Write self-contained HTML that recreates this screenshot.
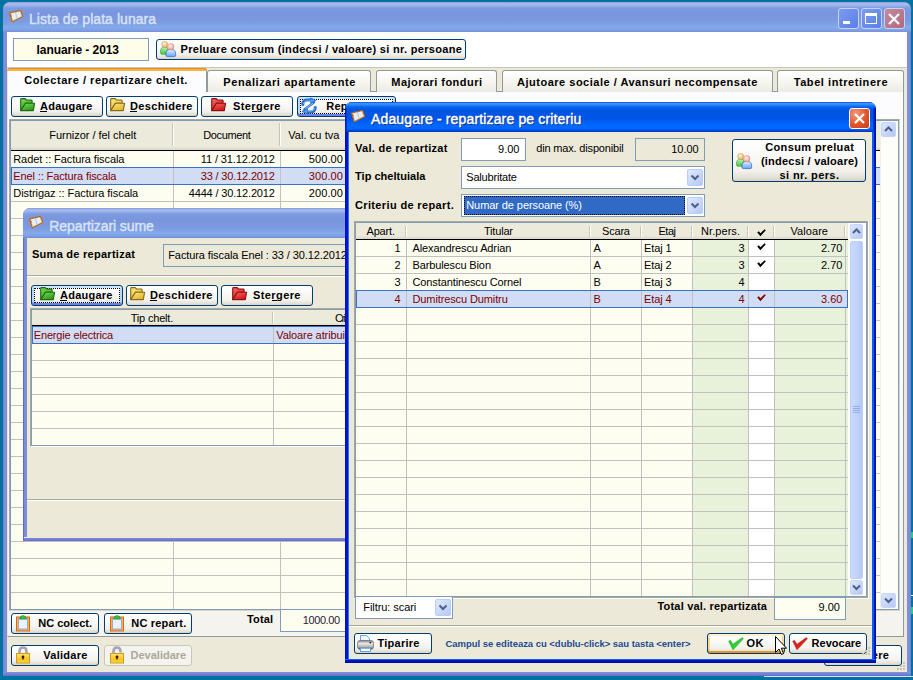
<!DOCTYPE html>
<html><head><meta charset="utf-8"><style>
*{margin:0;padding:0;box-sizing:border-box}
html,body{width:913px;height:680px;overflow:hidden;background:#0272A0;font-family:"Liberation Sans",sans-serif;font-size:11px;color:#000}
div{position:absolute}
.t{white-space:nowrap}
.btn{border:1px solid #003C74;border-radius:3px;background:linear-gradient(#FFFFFF 0%,#FBFBF9 30%,#F2F1EC 75%,#E3E0D5 92%,#D6D0C3 100%)}
.btnd{border:1px solid #C9C7BA;border-radius:3px;background:#F4F3EE}
svg{position:absolute;overflow:visible}
</style></head><body><div style="left:3px;top:2px;width:908px;height:674px;background:linear-gradient(90deg,#6A78D0 0px,#7E8EDC 1px,#7E8EDC 907px,#6A78D0 908px);border-radius:7px 7px 0 0;"></div>
<div style="left:3px;top:672px;width:908px;height:4px;background:linear-gradient(#8492E0,#7482D8 2px,#6470C8 4px);"></div>
<div style="left:3px;top:2px;width:908px;height:30px;border-radius:7px 7px 0 0;background:linear-gradient(#7F90DD 0px,#A3B7EB 1px,#A3B7EB 3px,#7C9BE0 6px,#7A95DE 12px,#7C9BE1 20px,#82AAE9 25px,#7FA2E6 28px,#7A8CDA 30px);"></div>
<div class="t" style="left:29.00px;top:10.97px;font-size:14px;line-height:16px;letter-spacing:0.048px;color:#D9E3F8;-webkit-text-stroke:0.4px #D9E3F8;">Lista de plata lunara</div>
<div style="left:838px;top:8px;width:21px;height:21px;border:1px solid #C6D3F7;border-radius:3px;background:linear-gradient(135deg,#7E9BEF,#5A7FE8);"></div>
<div style="left:861px;top:8px;width:21px;height:21px;border:1px solid #C6D3F7;border-radius:3px;background:linear-gradient(135deg,#7E9BEF,#5A7FE8);"></div>
<div style="left:884px;top:8px;width:21px;height:21px;border:1px solid #C6D3F7;border-radius:3px;background:linear-gradient(135deg,#C48A9E,#AE6A80);"></div>
<svg style="left:838px;top:8px" width="67" height="21"><rect x="5" y="13" width="7" height="3" fill="#fff"/><rect x="27.5" y="5.5" width="11" height="10" fill="none" stroke="#fff" stroke-width="1"/><rect x="27" y="5" width="12" height="3" fill="#fff"/><path d="M51 6 L61 16 M61 6 L51 16" stroke="#fff" stroke-width="2.2"/></svg>
<div style="left:7px;top:32px;width:900px;height:640px;background:#ECE9D8;"></div>
<div style="left:7px;top:32px;width:900px;height:35px;background:#FFFFFF;"></div>
<div style="left:13px;top:38px;width:136px;height:23px;background:#FEFDE9;border:1px solid #7F9DB9;"></div>
<div class="t" style="left:36.50px;top:43.28px;font-size:12px;line-height:14px;letter-spacing:-0.060px;font-weight:bold;">Ianuarie - 2013</div>
<div class="btn" style="left:156px;top:39px;width:310px;height:21px;"></div>
<div class="t" style="left:180.60px;top:43.11px;font-size:11px;line-height:13px;letter-spacing:0.305px;font-weight:bold;">Preluare consum (indecsi / valoare) si nr. persoane</div>
<div style="left:7px;top:67px;width:900px;height:1px;background:#C9C6B6;"></div>
<div style="left:7px;top:91px;width:897px;height:546px;background:linear-gradient(#FCFCFE 0%,#FAFAF9 50%,#F4F3EE 100%);border:1px solid #919B9C;border-left-color:#E4E3DC;border-top-color:#919B9C;"></div>
<div style="left:207px;top:70px;width:164px;height:22px;border:1px solid #919B9C;border-bottom:none;border-radius:3px 3px 0 0;background:linear-gradient(#FFFFFF,#F7F6F1 50%,#ECEBE3);"></div>
<div class="t" style="left:223.25px;top:75.61px;font-size:11px;line-height:13px;letter-spacing:0.588px;font-weight:bold;">Penalizari apartamente</div>
<div style="left:376px;top:70px;width:121px;height:22px;border:1px solid #919B9C;border-bottom:none;border-radius:3px 3px 0 0;background:linear-gradient(#FFFFFF,#F7F6F1 50%,#ECEBE3);"></div>
<div class="t" style="left:391.25px;top:75.61px;font-size:11px;line-height:13px;letter-spacing:0.467px;font-weight:bold;">Majorari fonduri</div>
<div style="left:502px;top:70px;width:271px;height:22px;border:1px solid #919B9C;border-bottom:none;border-radius:3px 3px 0 0;background:linear-gradient(#FFFFFF,#F7F6F1 50%,#ECEBE3);"></div>
<div class="t" style="left:517.00px;top:75.61px;font-size:11px;line-height:13px;letter-spacing:0.510px;font-weight:bold;">Ajutoare sociale / Avansuri necompensate</div>
<div style="left:777px;top:70px;width:127px;height:22px;border:1px solid #919B9C;border-bottom:none;border-radius:3px 3px 0 0;background:linear-gradient(#FFFFFF,#F7F6F1 50%,#ECEBE3);"></div>
<div class="t" style="left:793.70px;top:75.61px;font-size:11px;line-height:13px;letter-spacing:0.568px;font-weight:bold;">Tabel intretinere</div>
<div style="left:7px;top:68px;width:200px;height:24px;background:#FCFCFE;border-left:1px solid #E4E3DC;border-right:1px solid #919B9C;border-radius:3px 3px 0 0;"></div>
<div style="left:7px;top:68px;width:200px;height:3px;background:#F7B33D;border-radius:3px 3px 0 0;border-top:1px solid #E68B2C;"></div>
<div class="t" style="left:24.25px;top:74.36px;font-size:11px;line-height:13px;letter-spacing:0.545px;font-weight:bold;">Colectare / repartizare chelt.</div>
<div class="btn" style="left:11px;top:96px;width:92px;height:21px;"></div>
<svg style="left:20px;top:98px" width="16" height="14" viewBox="0 0 16 14"><defs><linearGradient id="g1" x1="0" y1="0" x2="0.6" y2="1"><stop offset="0" stop-color="#7BE05A"/><stop offset="1" stop-color="#2E9A18"/></linearGradient></defs><path d="M0.7 1.5 Q0.7 0.6 1.6 0.6 H5.2 L6.6 2 H11.2 Q12.1 2 12.1 2.9 V5.2 H5.5 L0.7 12.6 Z" fill="url(#g1)" stroke="#1F6A10" stroke-width="1.1" stroke-linejoin="round"/><path d="M0.7 12.6 L5.5 5.2 H14.6 L13.3 12.6 Z" fill="url(#g1)" stroke="#1F6A10" stroke-width="1.1" stroke-linejoin="round"/></svg>
<div class="t" style="left:40.00px;top:99.86px;font-size:11px;line-height:13px;letter-spacing:0.250px;font-weight:bold;">Adaugare</div>
<div style="left:40px;top:111px;width:7px;height:1px;background:#000;"></div>
<div class="btn" style="left:106px;top:96px;width:92px;height:21px;"></div>
<svg style="left:110px;top:98px" width="16" height="14" viewBox="0 0 16 14"><defs><linearGradient id="g2" x1="0" y1="0" x2="0.6" y2="1"><stop offset="0" stop-color="#FBEA8A"/><stop offset="1" stop-color="#E0B830"/></linearGradient></defs><path d="M0.7 1.5 Q0.7 0.6 1.6 0.6 H5.2 L6.6 2 H11.2 Q12.1 2 12.1 2.9 V5.2 H5.5 L0.7 12.6 Z" fill="url(#g2)" stroke="#8A6A10" stroke-width="1.1" stroke-linejoin="round"/><path d="M0.7 12.6 L5.5 5.2 H14.6 L13.3 12.6 Z" fill="url(#g2)" stroke="#8A6A10" stroke-width="1.1" stroke-linejoin="round"/></svg>
<div class="t" style="left:130.00px;top:99.86px;font-size:11px;line-height:13px;letter-spacing:0.351px;font-weight:bold;">Deschidere</div>
<div style="left:130px;top:111px;width:7px;height:1px;background:#000;"></div>
<div class="btn" style="left:201px;top:96px;width:92px;height:21px;"></div>
<svg style="left:211px;top:98px" width="16" height="14" viewBox="0 0 16 14"><defs><linearGradient id="g3" x1="0" y1="0" x2="0.6" y2="1"><stop offset="0" stop-color="#FF6A6A"/><stop offset="1" stop-color="#D01818"/></linearGradient></defs><path d="M0.7 1.5 Q0.7 0.6 1.6 0.6 H5.2 L6.6 2 H11.2 Q12.1 2 12.1 2.9 V5.2 H5.5 L0.7 12.6 Z" fill="url(#g3)" stroke="#8A1010" stroke-width="1.1" stroke-linejoin="round"/><path d="M0.7 12.6 L5.5 5.2 H14.6 L13.3 12.6 Z" fill="url(#g3)" stroke="#8A1010" stroke-width="1.1" stroke-linejoin="round"/></svg>
<div class="t" style="left:233.00px;top:99.86px;font-size:11px;line-height:13px;letter-spacing:0.406px;font-weight:bold;">Stergere</div>
<div style="left:252px;top:111px;width:5px;height:1px;background:#000;"></div>
<div class="btn" style="left:297px;top:96px;width:99px;height:21px;box-shadow:inset 0 2px 0 #CEE7FF, inset 0 -2px 0 #6982EE, inset 2px 0 0 #B8D6FB, inset -2px 0 0 #B8D6FB;"></div>
<div style="left:300px;top:99px;width:93px;height:15px;border:1px dotted #000;"></div>
<svg style="left:301px;top:98px" width="16" height="16" viewBox="0 0 16 16"><path d="M1.8 6.5 C1.6 3.2 3.8 2 7 2 H10.5" fill="none" stroke="#2A6FD0" stroke-width="3" stroke-linecap="round"/><path d="M9.5 0 L15 2.6 L9.5 5.2 Z" fill="#4A9AF0" stroke="#2A6FD0" stroke-width="0.9" stroke-linejoin="round"/><path d="M12.8 4.6 L3.4 11.4" stroke="#2A6FD0" stroke-width="2.4" stroke-linecap="round"/><path d="M14.2 9.5 C14.4 12.8 12.2 14 9 14 H5.5" fill="none" stroke="#2A6FD0" stroke-width="3" stroke-linecap="round"/><path d="M6.5 10.8 L1 13.4 L6.5 16 Z" fill="#4A9AF0" stroke="#2A6FD0" stroke-width="0.9" stroke-linejoin="round"/><path d="M2.7 6 C2.7 3.8 4.4 3 7 3 H10 M13.3 10 C13.2 12.2 12 13 9 13 H6.5 M12 5.2 L4.2 10.8" fill="none" stroke="#9AD2FF" stroke-width="0.8"/></svg>
<div class="t" style="left:326.25px;top:99.86px;font-size:11px;line-height:13px;letter-spacing:0.240px;font-weight:bold;">Repartizare</div>
<div style="left:9px;top:119px;width:891px;height:492px;border:1px solid #ACA899;border-right-color:#D8D4C8;border-bottom-color:#D8D4C8;"></div>
<div style="left:10px;top:120px;width:889px;height:490px;background:#FEFEF0;border:1px solid #7F9DB9;"></div>
<div style="left:11px;top:121px;width:869px;height:29px;background:linear-gradient(#EBEADB 0%,#EBEADB 88%,#DAD7C8 100%);"></div>
<div style="left:11px;top:150px;width:869px;height:1px;background:#000;"></div>
<div style="left:173px;top:151px;width:1px;height:458px;background:#C0C0C0;"></div>
<div style="left:280px;top:151px;width:1px;height:458px;background:#C0C0C0;"></div>
<div style="left:347px;top:151px;width:1px;height:458px;background:#C0C0C0;"></div>
<div style="left:172px;top:123px;width:1px;height:23px;background:#C8C5B4;"></div>
<div style="left:173px;top:123px;width:1px;height:23px;background:#FFFFFF;"></div>
<div style="left:279px;top:123px;width:1px;height:23px;background:#C8C5B4;"></div>
<div style="left:280px;top:123px;width:1px;height:23px;background:#FFFFFF;"></div>
<div style="left:346px;top:123px;width:1px;height:23px;background:#C8C5B4;"></div>
<div style="left:347px;top:123px;width:1px;height:23px;background:#FFFFFF;"></div>
<div style="left:11px;top:167px;width:869px;height:1px;background:#C0C0C0;"></div>
<div style="left:11px;top:184px;width:869px;height:1px;background:#C0C0C0;"></div>
<div style="left:11px;top:201px;width:869px;height:1px;background:#C0C0C0;"></div>
<div style="left:11px;top:218px;width:869px;height:1px;background:#C0C0C0;"></div>
<div style="left:11px;top:235px;width:869px;height:1px;background:#C0C0C0;"></div>
<div style="left:11px;top:252px;width:869px;height:1px;background:#C0C0C0;"></div>
<div style="left:11px;top:269px;width:869px;height:1px;background:#C0C0C0;"></div>
<div style="left:11px;top:286px;width:869px;height:1px;background:#C0C0C0;"></div>
<div style="left:11px;top:303px;width:869px;height:1px;background:#C0C0C0;"></div>
<div style="left:11px;top:320px;width:869px;height:1px;background:#C0C0C0;"></div>
<div style="left:11px;top:337px;width:869px;height:1px;background:#C0C0C0;"></div>
<div style="left:11px;top:354px;width:869px;height:1px;background:#C0C0C0;"></div>
<div style="left:11px;top:371px;width:869px;height:1px;background:#C0C0C0;"></div>
<div style="left:11px;top:388px;width:869px;height:1px;background:#C0C0C0;"></div>
<div style="left:11px;top:405px;width:869px;height:1px;background:#C0C0C0;"></div>
<div style="left:11px;top:422px;width:869px;height:1px;background:#C0C0C0;"></div>
<div style="left:11px;top:439px;width:869px;height:1px;background:#C0C0C0;"></div>
<div style="left:11px;top:456px;width:869px;height:1px;background:#C0C0C0;"></div>
<div style="left:11px;top:473px;width:869px;height:1px;background:#C0C0C0;"></div>
<div style="left:11px;top:490px;width:869px;height:1px;background:#C0C0C0;"></div>
<div style="left:11px;top:507px;width:869px;height:1px;background:#C0C0C0;"></div>
<div style="left:11px;top:524px;width:869px;height:1px;background:#C0C0C0;"></div>
<div style="left:11px;top:541px;width:869px;height:1px;background:#C0C0C0;"></div>
<div style="left:11px;top:558px;width:869px;height:1px;background:#C0C0C0;"></div>
<div style="left:11px;top:575px;width:869px;height:1px;background:#C0C0C0;"></div>
<div style="left:11px;top:592px;width:869px;height:1px;background:#C0C0C0;"></div>
<div style="left:11px;top:167px;width:869px;height:18px;background:#D1DDF5;border-top:1px solid #3A6FC6;border-bottom:1px solid #3A6FC6;border-left:1px solid #3A6FC6;"></div>
<div style="left:173px;top:168px;width:1px;height:16px;background:#C0C0C0;"></div>
<div style="left:280px;top:168px;width:1px;height:16px;background:#C0C0C0;"></div>
<div class="t" style="left:49.25px;top:128.61px;font-size:11px;line-height:13px;letter-spacing:-0.025px;">Furnizor / fel chelt</div>
<div class="t" style="left:203.25px;top:128.61px;font-size:11px;line-height:13px;letter-spacing:-0.379px;">Document</div>
<div class="t" style="left:288.25px;top:128.61px;font-size:11px;line-height:13px;letter-spacing:0.066px;">Val. cu tva</div>
<div class="t" style="left:13.25px;top:152.86px;font-size:11px;line-height:13px;letter-spacing:-0.084px;">Radet :: Factura fiscala</div>
<div class="t" style="left:200.75px;top:152.86px;font-size:11px;line-height:13px;letter-spacing:-0.107px;">11 / 31.12.2012</div>
<div class="t" style="left:308.81px;top:152.86px;font-size:11px;line-height:13px;letter-spacing:0.100px;">500.00</div>
<div class="t" style="left:13.25px;top:169.86px;font-size:11px;line-height:13px;letter-spacing:-0.118px;color:#800000;">Enel :: Factura fiscala</div>
<div class="t" style="left:200.75px;top:169.86px;font-size:11px;line-height:13px;letter-spacing:-0.165px;color:#800000;">33 / 30.12.2012</div>
<div class="t" style="left:308.81px;top:169.86px;font-size:11px;line-height:13px;letter-spacing:0.100px;color:#800000;">300.00</div>
<div class="t" style="left:13.25px;top:186.86px;font-size:11px;line-height:13px;letter-spacing:-0.059px;">Distrigaz :: Factura fiscala</div>
<div class="t" style="left:188.75px;top:186.86px;font-size:11px;line-height:13px;letter-spacing:-0.160px;">4444 / 30.12.2012</div>
<div class="t" style="left:308.81px;top:186.86px;font-size:11px;line-height:13px;letter-spacing:0.100px;">200.00</div>
<div style="left:880px;top:121px;width:18px;height:488px;background:#FDFDF9;border-left:1px solid #EFEFEA;"></div>
<div style="left:881px;top:122px;width:15px;height:15px;border:1px solid #C7D5F8;border-radius:2px;background:linear-gradient(135deg,#DDE7FD,#B4C8F6);"></div>
<svg style="left:881px;top:122px" width="15" height="15"><path d="M4.0 9.0 L7.5 5.5 L11.0 9.0" fill="none" stroke="#4D6185" stroke-width="2"/></svg>
<div style="left:881px;top:593px;width:15px;height:15px;border:1px solid #C7D5F8;border-radius:2px;background:linear-gradient(135deg,#DDE7FD,#B4C8F6);"></div>
<svg style="left:881px;top:593px" width="15" height="15"><path d="M4.0 5.5 L7.5 9.0 L11.0 5.5" fill="none" stroke="#4D6185" stroke-width="2"/></svg>
<div class="btn" style="left:11px;top:613px;width:88px;height:21px;"></div>
<svg style="left:15px;top:615px" width="16" height="17" viewBox="0 0 16 17"><rect x="1.5" y="2" width="13" height="14" fill="#F7B04A" stroke="#D9661E" stroke-width="1"/><rect x="3.5" y="4" width="9" height="10" fill="#EAF2FF" stroke="#8AA8D8" stroke-width="0.9"/><path d="M4.5 4 Q5 0.6 8 0.6 Q11 0.6 11.5 4 Z" fill="#3CC040" stroke="#2A8A2A" stroke-width="0.6"/></svg>
<div class="t" style="left:38.25px;top:616.86px;font-size:11px;line-height:13px;letter-spacing:-0.007px;font-weight:bold;">NC colect.</div>
<div class="btn" style="left:104px;top:613px;width:88px;height:21px;"></div>
<svg style="left:109px;top:615px" width="16" height="17" viewBox="0 0 16 17"><rect x="1.5" y="2" width="13" height="14" fill="#F7B04A" stroke="#D9661E" stroke-width="1"/><rect x="3.5" y="4" width="9" height="10" fill="#EAF2FF" stroke="#8AA8D8" stroke-width="0.9"/><path d="M4.5 4 Q5 0.6 8 0.6 Q11 0.6 11.5 4 Z" fill="#3CC040" stroke="#2A8A2A" stroke-width="0.6"/></svg>
<div class="t" style="left:131.25px;top:616.86px;font-size:11px;line-height:13px;letter-spacing:0.201px;font-weight:bold;">NC repart.</div>
<div class="t" style="left:247.00px;top:613.16px;font-size:11px;line-height:13px;letter-spacing:0.133px;font-weight:bold;">Total</div>
<div style="left:280px;top:609px;width:100px;height:23px;background:#FEFEF0;border:1px solid #7F9DB9;"></div>
<div class="t" style="left:302.70px;top:613.61px;font-size:11px;line-height:13px;letter-spacing:-0.385px;color:#281838;">1000.00</div>
<div class="btn" style="left:11px;top:645px;width:88px;height:21px;"></div>
<svg style="left:15px;top:646px" width="16" height="18" viewBox="0 0 16 18"><path d="M4.5 8 V5.4 Q4.5 1.5 8 1.5 Q11.5 1.5 11.5 5.4 V8" fill="none" stroke="#A4A4B4" stroke-width="2.6"/><defs><linearGradient id="g4" x1="0" y1="0" x2="0" y2="1"><stop offset="0" stop-color="#FDE870"/><stop offset="0.6" stop-color="#F6C420"/><stop offset="1" stop-color="#F8DA40"/></linearGradient></defs><rect x="1.5" y="7.5" width="13" height="9.5" fill="url(#g4)" stroke="#D49A20" stroke-width="1"/><circle cx="8" cy="11" r="1.4" fill="#4A1000"/><rect x="7.4" y="11" width="1.2" height="2.6" fill="#4A1000"/></svg>
<div class="t" style="left:43.25px;top:648.61px;font-size:11px;line-height:13px;letter-spacing:0.288px;font-weight:bold;">Validare</div>
<div class="btnd" style="left:104px;top:645px;width:88px;height:21px;"></div>
<svg style="left:109px;top:646px" width="16" height="18" viewBox="0 0 16 18"><path d="M4.5 8 V5.4 Q4.5 1.5 8 1.5 Q11.5 1.5 11.5 5.4 V6.5" fill="none" stroke="#A4A4B4" stroke-width="2.6"/><defs><linearGradient id="g5" x1="0" y1="0" x2="0" y2="1"><stop offset="0" stop-color="#FDE870"/><stop offset="0.6" stop-color="#F6C420"/><stop offset="1" stop-color="#F8DA40"/></linearGradient></defs><rect x="1.5" y="7.5" width="13" height="9.5" fill="url(#g5)" stroke="#D49A20" stroke-width="1"/><circle cx="8" cy="11" r="1.4" fill="#4A1000"/><rect x="7.4" y="11" width="1.2" height="2.6" fill="#4A1000"/></svg>
<div class="t" style="left:130.50px;top:648.61px;font-size:11px;line-height:13px;letter-spacing:0.007px;font-weight:bold;color:#ACA899;">Devalidare</div>
<div class="btn" style="left:824px;top:645px;width:78px;height:21px;"></div>
<div class="t" style="left:837.62px;top:648.61px;font-size:11px;line-height:13px;letter-spacing:0.306px;font-weight:bold;">Inchidere</div>
<svg style="left:160px;top:41px" width="17" height="17" viewBox="0 0 17 17"><defs><radialGradient id="g6" cx="0.4" cy="0.35" r="0.7"><stop offset="0" stop-color="#FFF4D8"/><stop offset="1" stop-color="#E8B060"/></radialGradient><radialGradient id="g7" cx="0.4" cy="0.35" r="0.7"><stop offset="0" stop-color="#FFF0EC"/><stop offset="1" stop-color="#F0A090"/></radialGradient><linearGradient id="g8" x1="0" y1="0" x2="0" y2="1"><stop offset="0" stop-color="#C8F0C0"/><stop offset="1" stop-color="#3CC83C"/></linearGradient><linearGradient id="g9" x1="0" y1="0" x2="0" y2="1"><stop offset="0" stop-color="#E0F0FF"/><stop offset="1" stop-color="#60A8F8"/></linearGradient></defs><path d="M0.4 11 Q0.4 5.8 4.6 5.8 Q8.2 5.8 8.2 9 V12.4 Q8.2 13.3 7 13.3 H1.6 Q0.4 13.3 0.4 11 Z" fill="url(#g8)" stroke="#3A9A30" stroke-width="0.6"/><circle cx="4.7" cy="3.4" r="3" fill="url(#g6)" stroke="#C09050" stroke-width="0.5"/><path d="M5.9 13 Q5.9 8.3 10.8 8.3 Q15.7 8.3 15.7 13 V14.2 Q15.7 15.6 14.2 15.6 H7.4 Q5.9 15.6 5.9 14.2 Z" fill="url(#g9)" stroke="#3560B0" stroke-width="0.7"/><circle cx="10.7" cy="5.7" r="3.2" fill="url(#g7)" stroke="#D07868" stroke-width="0.5"/></svg>
<div style="left:23px;top:208px;width:337px;height:333px;background:#7C8EDB;border-radius:7px 7px 0 0;"></div>
<div style="left:23px;top:208px;width:337px;height:30px;border-radius:7px 7px 0 0;background:linear-gradient(#7088DE 0px,#A3B7EB 1px,#A3B7EB 3px,#7C9BE0 6px,#7A95DE 12px,#7C9BE1 20px,#82AAE9 25px,#7FA2E6 28px,#6E86DA 30px);"></div>
<svg style="left:29px;top:216px" width="15" height="13" viewBox="0 0 15 13"><path d="M0.5 2.8 L11.7 0.4 L13.8 6.6 L3.2 11.9 Z" fill="#F0A848" stroke="#B06818" stroke-width="1" stroke-linejoin="round"/><path d="M2 3.4 L10.9 1.5 L12.5 6.2 L3.8 10.4 Z" fill="#E4EEFC"/><path d="M6.4 2.5 L8.1 8.3" stroke="#9CB4D8" stroke-width="0.7"/><path d="M1.6 4.6 L2.4 6.6" stroke="#E04020" stroke-width="0.8"/></svg>
<div class="t" style="left:49.25px;top:217.67px;font-size:14px;line-height:16px;letter-spacing:-0.084px;color:#D9E3F8;-webkit-text-stroke:0.4px #D9E3F8;">Repartizari sume</div>
<div style="left:27px;top:238px;width:333px;height:299px;background:#ECE9D8;"></div>
<div style="left:23px;top:537px;width:337px;height:4px;background:linear-gradient(#ECE9D8 0px,#ECE9D8 0.5px,#7A8ADC 1px,#6E7CD4 3px,#6068C8 4px);"></div>
<div style="left:23px;top:238px;width:1px;height:303px;background:#6068CC;"></div>
<div class="t" style="left:32.00px;top:247.86px;font-size:11px;line-height:13px;letter-spacing:0.267px;font-weight:bold;">Suma de repartizat</div>
<div style="left:163px;top:244px;width:200px;height:23px;background:#ECE9D8;border:1px solid #7F9DB9;"></div>
<div class="t" style="left:168.25px;top:248.61px;font-size:11px;line-height:13px;letter-spacing:-0.099px;">Factura fiscala Enel : 33 / 30.12.2012</div>
<div style="left:27px;top:275px;width:333px;height:1px;background:#ACA899;"></div>
<div style="left:27px;top:276px;width:333px;height:1px;background:#FFFFFF;"></div>
<div class="btn" style="left:31px;top:285px;width:92px;height:21px;box-shadow:inset 0 2px 0 #CEE7FF, inset 0 -2px 0 #6982EE, inset 2px 0 0 #B8D6FB, inset -2px 0 0 #B8D6FB;"></div>
<div style="left:34px;top:288px;width:86px;height:15px;border:1px dotted #000;"></div>
<svg style="left:40px;top:287px" width="16" height="14" viewBox="0 0 16 14"><defs><linearGradient id="g10" x1="0" y1="0" x2="0.6" y2="1"><stop offset="0" stop-color="#7BE05A"/><stop offset="1" stop-color="#2E9A18"/></linearGradient></defs><path d="M0.7 1.5 Q0.7 0.6 1.6 0.6 H5.2 L6.6 2 H11.2 Q12.1 2 12.1 2.9 V5.2 H5.5 L0.7 12.6 Z" fill="url(#g10)" stroke="#1F6A10" stroke-width="1.1" stroke-linejoin="round"/><path d="M0.7 12.6 L5.5 5.2 H14.6 L13.3 12.6 Z" fill="url(#g10)" stroke="#1F6A10" stroke-width="1.1" stroke-linejoin="round"/></svg>
<div class="t" style="left:60.00px;top:288.61px;font-size:11px;line-height:13px;letter-spacing:0.250px;font-weight:bold;">Adaugare</div>
<div style="left:60px;top:300px;width:7px;height:1px;background:#000;"></div>
<div class="btn" style="left:126px;top:285px;width:92px;height:21px;"></div>
<svg style="left:130px;top:287px" width="16" height="14" viewBox="0 0 16 14"><defs><linearGradient id="g11" x1="0" y1="0" x2="0.6" y2="1"><stop offset="0" stop-color="#FBEA8A"/><stop offset="1" stop-color="#E0B830"/></linearGradient></defs><path d="M0.7 1.5 Q0.7 0.6 1.6 0.6 H5.2 L6.6 2 H11.2 Q12.1 2 12.1 2.9 V5.2 H5.5 L0.7 12.6 Z" fill="url(#g11)" stroke="#8A6A10" stroke-width="1.1" stroke-linejoin="round"/><path d="M0.7 12.6 L5.5 5.2 H14.6 L13.3 12.6 Z" fill="url(#g11)" stroke="#8A6A10" stroke-width="1.1" stroke-linejoin="round"/></svg>
<div class="t" style="left:150.00px;top:288.61px;font-size:11px;line-height:13px;letter-spacing:0.351px;font-weight:bold;">Deschidere</div>
<div style="left:150px;top:300px;width:7px;height:1px;background:#000;"></div>
<div class="btn" style="left:221px;top:285px;width:92px;height:21px;"></div>
<svg style="left:232px;top:287px" width="16" height="14" viewBox="0 0 16 14"><defs><linearGradient id="g12" x1="0" y1="0" x2="0.6" y2="1"><stop offset="0" stop-color="#FF6A6A"/><stop offset="1" stop-color="#D01818"/></linearGradient></defs><path d="M0.7 1.5 Q0.7 0.6 1.6 0.6 H5.2 L6.6 2 H11.2 Q12.1 2 12.1 2.9 V5.2 H5.5 L0.7 12.6 Z" fill="url(#g12)" stroke="#8A1010" stroke-width="1.1" stroke-linejoin="round"/><path d="M0.7 12.6 L5.5 5.2 H14.6 L13.3 12.6 Z" fill="url(#g12)" stroke="#8A1010" stroke-width="1.1" stroke-linejoin="round"/></svg>
<div class="t" style="left:253.00px;top:288.61px;font-size:11px;line-height:13px;letter-spacing:0.406px;font-weight:bold;">Stergere</div>
<div style="left:272px;top:300px;width:5px;height:1px;background:#000;"></div>
<div style="left:30px;top:308px;width:340px;height:139px;border:1px solid #ACA899;border-bottom-color:#FFFFFF;"></div>
<div style="left:31px;top:309px;width:340px;height:137px;background:#FEFEF0;border:1px solid #7F9DB9;"></div>
<div style="left:32px;top:310px;width:330px;height:16px;background:linear-gradient(#EBEADB 0%,#EBEADB 80%,#DAD7C8 100%);"></div>
<div style="left:32px;top:325px;width:330px;height:1px;background:#000;"></div>
<div style="left:272px;top:312px;width:1px;height:12px;background:#C8C5B4;"></div>
<div style="left:273px;top:312px;width:1px;height:12px;background:#FFFFFF;"></div>
<div style="left:273px;top:326px;width:1px;height:119px;background:#C0C0C0;"></div>
<div style="left:32px;top:360px;width:330px;height:1px;background:#C0C0C0;"></div>
<div style="left:32px;top:377px;width:330px;height:1px;background:#C0C0C0;"></div>
<div style="left:32px;top:394px;width:330px;height:1px;background:#C0C0C0;"></div>
<div style="left:32px;top:411px;width:330px;height:1px;background:#C0C0C0;"></div>
<div style="left:32px;top:428px;width:330px;height:1px;background:#C0C0C0;"></div>
<div style="left:32px;top:326px;width:330px;height:18px;background:#D1DDF5;border-top:1px solid #3A6FC6;border-bottom:1px solid #3A6FC6;border-left:1px solid #3A6FC6;"></div>
<div style="left:273px;top:327px;width:1px;height:16px;background:#C0C0C0;"></div>
<div class="t" style="left:130.75px;top:311.86px;font-size:11px;line-height:13px;letter-spacing:-0.194px;">Tip chelt.</div>
<div class="t" style="left:335.00px;top:311.86px;font-size:11px;line-height:13px;letter-spacing:-1.491px;">Criteriu</div>
<div class="t" style="left:33.75px;top:328.61px;font-size:11px;line-height:13px;letter-spacing:-0.154px;color:#800000;">Energie electrica</div>
<div class="t" style="left:276.25px;top:328.61px;font-size:11px;line-height:13px;letter-spacing:-0.099px;color:#800000;">Valoare atribuita</div>
<div style="left:27px;top:499px;width:333px;height:1px;background:#ACA899;"></div>
<div style="left:27px;top:500px;width:333px;height:1px;background:#FFFFFF;"></div>
<div style="left:345px;top:102px;width:531px;height:561px;background:#0831D9;border-radius:7px 7px 0 0;"></div>
<div style="left:345px;top:102px;width:531px;height:30px;border-radius:7px 7px 0 0;background:linear-gradient(#0A48D8 0px,#3A93FF 1.5px,#2A86FA 3px,#0862EE 5px,#0055E5 8px,#0055E5 17px,#005DF3 19px,#0068FF 23px,#0066FF 27px,#0048D8 28.5px,#0030C0 30px);"></div>
<div style="left:345px;top:132px;width:4px;height:531px;background:linear-gradient(90deg,#0010C0 0px,#0018D8 3px,#2A70F8 3px,#2A70F8 4px);"></div>
<div style="left:872px;top:132px;width:4px;height:531px;background:linear-gradient(90deg,#0A5CF6 0px,#0A5CF6 2px,#0018C8 2px,#000C98 4px);"></div>
<div style="left:345px;top:659px;width:531px;height:4px;background:linear-gradient(#0A5CF6 0px,#0A5CF6 1px,#0018C8 1px,#000C98 4px);"></div>
<div style="left:873px;top:108px;width:3px;height:24px;background:linear-gradient(90deg,#0040D8,#0018B8 2px,#000C98);"></div>
<div style="left:345px;top:108px;width:2px;height:24px;background:linear-gradient(90deg,#0014B8,#0840E0);"></div>
<svg style="left:351px;top:110px" width="15" height="13" viewBox="0 0 15 13"><path d="M0.5 2.8 L11.7 0.4 L13.8 6.6 L3.2 11.9 Z" fill="#F0A848" stroke="#B06818" stroke-width="1" stroke-linejoin="round"/><path d="M2 3.4 L10.9 1.5 L12.5 6.2 L3.8 10.4 Z" fill="#E4EEFC"/><path d="M6.4 2.5 L8.1 8.3" stroke="#9CB4D8" stroke-width="0.7"/><path d="M1.6 4.6 L2.4 6.6" stroke="#E04020" stroke-width="0.8"/></svg>
<div class="t" style="left:371.00px;top:111.17px;font-size:14px;line-height:16px;letter-spacing:0.149px;color:#FFFFFF;-webkit-text-stroke:0.45px #FFFFFF;text-shadow:1px 1px 0 #0A1E6A;">Adaugare - repartizare pe criteriu</div>
<div style="left:849px;top:108px;width:21px;height:21px;border:1px solid #FFFFFF;border-radius:3px;background:radial-gradient(circle at 30% 25%,#F29A7A,#E0562C 55%,#C63A14);"></div>
<svg style="left:849px;top:108px" width="21" height="21"><path d="M6 6 L15 15 M15 6 L6 15" stroke="#fff" stroke-width="2.2"/></svg>
<div style="left:349px;top:132px;width:523px;height:527px;background:#ECE9D8;"></div>
<div class="t" style="left:355.00px;top:142.36px;font-size:11px;line-height:13px;letter-spacing:0.295px;font-weight:bold;">Val. de repartizat</div>
<div style="left:461px;top:138px;width:65px;height:23px;background:#FFFFFF;border:1px solid #7F9DB9;"></div>
<div class="t" style="left:498.06px;top:142.86px;font-size:11px;line-height:13px;letter-spacing:0.000px;">9.00</div>
<div class="t" style="left:536.25px;top:141.86px;font-size:11px;line-height:13px;letter-spacing:-0.168px;">din max. disponibil</div>
<div style="left:635px;top:138px;width:70px;height:23px;background:#ECE9D8;border:1px solid #7F9DB9;"></div>
<div class="t" style="left:671.19px;top:142.86px;font-size:11px;line-height:13px;letter-spacing:0.000px;">10.00</div>
<div class="t" style="left:355.00px;top:169.86px;font-size:11px;line-height:13px;letter-spacing:0.028px;font-weight:bold;">Tip cheltuiala</div>
<div style="left:461px;top:166px;width:244px;height:23px;background:#FFFFFF;border:1px solid #7F9DB9;"></div>
<div class="t" style="left:466.25px;top:170.61px;font-size:11px;line-height:13px;letter-spacing:-0.188px;">Salubritate</div>
<div style="left:687px;top:169px;width:16px;height:17px;border:1px solid #B9CCF6;border-radius:2px;background:linear-gradient(135deg,#E0E9FD,#B5C8F7);"></div>
<svg style="left:687px;top:169px" width="16" height="17"><path d="M4.5 6.5 L8.0 10.0 L11.5 6.5" fill="none" stroke="#4D6185" stroke-width="2"/></svg>
<div class="t" style="left:355.00px;top:198.61px;font-size:11px;line-height:13px;letter-spacing:0.356px;font-weight:bold;">Criteriu de repart.</div>
<div style="left:461px;top:194px;width:244px;height:23px;background:#FFFFFF;border:1px solid #7F9DB9;"></div>
<div style="left:464px;top:196px;width:221px;height:19px;background:#316AC5;border:1px dotted #000;"></div>
<div class="t" style="left:466.25px;top:199.11px;font-size:11px;line-height:13px;letter-spacing:-0.084px;color:#FFFFFF;">Numar de persoane (%)</div>
<div style="left:687px;top:197px;width:16px;height:17px;border:1px solid #B9CCF6;border-radius:2px;background:linear-gradient(135deg,#E0E9FD,#B5C8F7);"></div>
<svg style="left:687px;top:197px" width="16" height="17"><path d="M4.5 6.5 L8.0 10.0 L11.5 6.5" fill="none" stroke="#4D6185" stroke-width="2"/></svg>
<div class="btn" style="left:732px;top:139px;width:134px;height:43px;"></div>
<svg style="left:736px;top:153px" width="17" height="17" viewBox="0 0 17 17"><defs><radialGradient id="g13" cx="0.4" cy="0.35" r="0.7"><stop offset="0" stop-color="#FFF4D8"/><stop offset="1" stop-color="#E8B060"/></radialGradient><radialGradient id="g14" cx="0.4" cy="0.35" r="0.7"><stop offset="0" stop-color="#FFF0EC"/><stop offset="1" stop-color="#F0A090"/></radialGradient><linearGradient id="g15" x1="0" y1="0" x2="0" y2="1"><stop offset="0" stop-color="#C8F0C0"/><stop offset="1" stop-color="#3CC83C"/></linearGradient><linearGradient id="g16" x1="0" y1="0" x2="0" y2="1"><stop offset="0" stop-color="#E0F0FF"/><stop offset="1" stop-color="#60A8F8"/></linearGradient></defs><path d="M0.4 11 Q0.4 5.8 4.6 5.8 Q8.2 5.8 8.2 9 V12.4 Q8.2 13.3 7 13.3 H1.6 Q0.4 13.3 0.4 11 Z" fill="url(#g15)" stroke="#3A9A30" stroke-width="0.6"/><circle cx="4.7" cy="3.4" r="3" fill="url(#g13)" stroke="#C09050" stroke-width="0.5"/><path d="M5.9 13 Q5.9 8.3 10.8 8.3 Q15.7 8.3 15.7 13 V14.2 Q15.7 15.6 14.2 15.6 H7.4 Q5.9 15.6 5.9 14.2 Z" fill="url(#g16)" stroke="#3560B0" stroke-width="0.7"/><circle cx="10.7" cy="5.7" r="3.2" fill="url(#g14)" stroke="#D07868" stroke-width="0.5"/></svg>
<div class="t" style="left:765.20px;top:141.11px;font-size:11px;line-height:13px;letter-spacing:0.381px;font-weight:bold;">Consum preluat</div>
<div class="t" style="left:760.90px;top:154.86px;font-size:11px;line-height:13px;letter-spacing:0.228px;font-weight:bold;">(indecsi / valoare)</div>
<div class="t" style="left:779.50px;top:168.61px;font-size:11px;line-height:13px;letter-spacing:0.402px;font-weight:bold;">si nr. pers.</div>
<div style="left:354px;top:221px;width:515px;height:378px;border-right:1px solid #FFFFFF;border-bottom:1px solid #FFFFFF;"></div>
<div style="left:354px;top:221px;width:514px;height:377px;border:1px solid #ACA899;"></div>
<div style="left:355px;top:222px;width:512px;height:375px;background:#FEFEF0;border:1px solid #7F9DB9;"></div>
<div style="left:692px;top:240px;width:56px;height:356px;background:#E8F2DB;"></div>
<div style="left:749px;top:240px;width:25px;height:356px;background:#FFFFFF;"></div>
<div style="left:774px;top:240px;width:74px;height:356px;background:#E8F2DB;"></div>
<div style="left:356px;top:223px;width:493px;height:16px;background:linear-gradient(#EBEADB 0%,#EBEADB 80%,#DAD7C8 100%);"></div>
<div style="left:356px;top:239px;width:493px;height:1px;background:#000;"></div>
<div style="left:405px;top:226px;width:1px;height:11px;background:#C8C5B4;"></div>
<div style="left:406px;top:226px;width:1px;height:11px;background:#FFFFFF;"></div>
<div style="left:406px;top:240px;width:1px;height:356px;background:#C0C0C0;"></div>
<div style="left:589px;top:226px;width:1px;height:11px;background:#C8C5B4;"></div>
<div style="left:590px;top:226px;width:1px;height:11px;background:#FFFFFF;"></div>
<div style="left:590px;top:240px;width:1px;height:356px;background:#C0C0C0;"></div>
<div style="left:640px;top:226px;width:1px;height:11px;background:#C8C5B4;"></div>
<div style="left:641px;top:226px;width:1px;height:11px;background:#FFFFFF;"></div>
<div style="left:641px;top:240px;width:1px;height:356px;background:#C0C0C0;"></div>
<div style="left:691px;top:226px;width:1px;height:11px;background:#C8C5B4;"></div>
<div style="left:692px;top:226px;width:1px;height:11px;background:#FFFFFF;"></div>
<div style="left:692px;top:240px;width:1px;height:356px;background:#C0C0C0;"></div>
<div style="left:747px;top:226px;width:1px;height:11px;background:#C8C5B4;"></div>
<div style="left:748px;top:226px;width:1px;height:11px;background:#FFFFFF;"></div>
<div style="left:748px;top:240px;width:1px;height:356px;background:#C0C0C0;"></div>
<div style="left:773px;top:226px;width:1px;height:11px;background:#C8C5B4;"></div>
<div style="left:774px;top:226px;width:1px;height:11px;background:#FFFFFF;"></div>
<div style="left:774px;top:240px;width:1px;height:356px;background:#C0C0C0;"></div>
<div style="left:844px;top:226px;width:1px;height:11px;background:#C8C5B4;"></div>
<div style="left:845px;top:226px;width:1px;height:11px;background:#FFFFFF;"></div>
<div style="left:845px;top:240px;width:1px;height:356px;background:#C0C0C0;"></div>
<div style="left:356px;top:256px;width:492px;height:1px;background:#C0C0C0;"></div>
<div style="left:356px;top:273px;width:492px;height:1px;background:#C0C0C0;"></div>
<div style="left:356px;top:290px;width:492px;height:1px;background:#C0C0C0;"></div>
<div style="left:356px;top:307px;width:492px;height:1px;background:#C0C0C0;"></div>
<div style="left:356px;top:324px;width:492px;height:1px;background:#C0C0C0;"></div>
<div style="left:356px;top:341px;width:492px;height:1px;background:#C0C0C0;"></div>
<div style="left:356px;top:358px;width:492px;height:1px;background:#C0C0C0;"></div>
<div style="left:356px;top:375px;width:492px;height:1px;background:#C0C0C0;"></div>
<div style="left:356px;top:392px;width:492px;height:1px;background:#C0C0C0;"></div>
<div style="left:356px;top:409px;width:492px;height:1px;background:#C0C0C0;"></div>
<div style="left:356px;top:426px;width:492px;height:1px;background:#C0C0C0;"></div>
<div style="left:356px;top:443px;width:492px;height:1px;background:#C0C0C0;"></div>
<div style="left:356px;top:460px;width:492px;height:1px;background:#C0C0C0;"></div>
<div style="left:356px;top:477px;width:492px;height:1px;background:#C0C0C0;"></div>
<div style="left:356px;top:494px;width:492px;height:1px;background:#C0C0C0;"></div>
<div style="left:356px;top:511px;width:492px;height:1px;background:#C0C0C0;"></div>
<div style="left:356px;top:528px;width:492px;height:1px;background:#C0C0C0;"></div>
<div style="left:356px;top:545px;width:492px;height:1px;background:#C0C0C0;"></div>
<div style="left:356px;top:562px;width:492px;height:1px;background:#C0C0C0;"></div>
<div style="left:356px;top:579px;width:492px;height:1px;background:#C0C0C0;"></div>
<div style="left:356px;top:290px;width:492px;height:18px;background:#D1DDF5;border-top:1px solid #3A6FC6;border-bottom:1px solid #3A6FC6;border-left:1px solid #3A6FC6;border-right:1px solid #3A6FC6;"></div>
<div style="left:406px;top:291px;width:1px;height:16px;background:#C0C0C0;"></div>
<div style="left:590px;top:291px;width:1px;height:16px;background:#C0C0C0;"></div>
<div style="left:641px;top:291px;width:1px;height:16px;background:#C0C0C0;"></div>
<div style="left:692px;top:291px;width:1px;height:16px;background:#C0C0C0;"></div>
<div style="left:748px;top:291px;width:1px;height:16px;background:#C0C0C0;"></div>
<div style="left:774px;top:291px;width:1px;height:16px;background:#C0C0C0;"></div>
<div class="t" style="left:366.50px;top:224.61px;font-size:11px;line-height:13px;letter-spacing:-0.175px;">Apart.</div>
<div class="t" style="left:484.00px;top:224.61px;font-size:11px;line-height:13px;letter-spacing:-0.193px;">Titular</div>
<div class="t" style="left:602.00px;top:224.61px;font-size:11px;line-height:13px;letter-spacing:-0.188px;">Scara</div>
<div class="t" style="left:658.50px;top:224.61px;font-size:11px;line-height:13px;letter-spacing:-0.490px;">Etaj</div>
<div class="t" style="left:701.00px;top:224.61px;font-size:11px;line-height:13px;letter-spacing:0.069px;">Nr.pers.</div>
<div class="t" style="left:790.50px;top:224.61px;font-size:11px;line-height:13px;letter-spacing:0.062px;">Valoare</div>
<svg style="left:757px;top:229px" width="9" height="8" viewBox="0 0 9 8"><path d="M0.2 3.6 L1.9 2.3 L3.4 4.2 L7.6 0.2 L8.8 1.3 L3.4 7.2 Z" fill="#000000"/></svg>
<div class="t" style="left:394.48px;top:241.86px;font-size:11px;line-height:13px;letter-spacing:0.000px;">1</div>
<div class="t" style="left:412.50px;top:241.86px;font-size:11px;line-height:13px;letter-spacing:-0.112px;">Alexandrescu Adrian</div>
<div class="t" style="left:593.50px;top:241.86px;font-size:11px;line-height:13px;letter-spacing:0.000px;">A</div>
<div class="t" style="left:644.00px;top:241.86px;font-size:11px;line-height:13px;letter-spacing:-0.113px;">Etaj 1</div>
<div class="t" style="left:738.38px;top:241.86px;font-size:11px;line-height:13px;letter-spacing:0.000px;">3</div>
<svg style="left:757px;top:243px" width="9" height="8" viewBox="0 0 9 8"><path d="M0.2 3.6 L1.9 2.3 L3.4 4.2 L7.6 0.2 L8.8 1.3 L3.4 7.2 Z" fill="#000000"/></svg>
<div class="t" style="left:820.96px;top:241.86px;font-size:11px;line-height:13px;letter-spacing:0.000px;">2.70</div>
<div class="t" style="left:394.48px;top:258.86px;font-size:11px;line-height:13px;letter-spacing:0.000px;">2</div>
<div class="t" style="left:412.50px;top:258.86px;font-size:11px;line-height:13px;letter-spacing:-0.115px;">Barbulescu Bion</div>
<div class="t" style="left:593.50px;top:258.86px;font-size:11px;line-height:13px;letter-spacing:0.000px;">A</div>
<div class="t" style="left:644.00px;top:258.86px;font-size:11px;line-height:13px;letter-spacing:-0.113px;">Etaj 2</div>
<div class="t" style="left:738.38px;top:258.86px;font-size:11px;line-height:13px;letter-spacing:0.000px;">3</div>
<svg style="left:757px;top:260px" width="9" height="8" viewBox="0 0 9 8"><path d="M0.2 3.6 L1.9 2.3 L3.4 4.2 L7.6 0.2 L8.8 1.3 L3.4 7.2 Z" fill="#000000"/></svg>
<div class="t" style="left:820.96px;top:258.86px;font-size:11px;line-height:13px;letter-spacing:0.000px;">2.70</div>
<div class="t" style="left:394.48px;top:275.86px;font-size:11px;line-height:13px;letter-spacing:0.000px;">3</div>
<div class="t" style="left:412.50px;top:275.86px;font-size:11px;line-height:13px;letter-spacing:-0.111px;">Constantinescu Cornel</div>
<div class="t" style="left:593.50px;top:275.86px;font-size:11px;line-height:13px;letter-spacing:0.000px;">B</div>
<div class="t" style="left:644.00px;top:275.86px;font-size:11px;line-height:13px;letter-spacing:-0.113px;">Etaj 3</div>
<div class="t" style="left:738.38px;top:275.86px;font-size:11px;line-height:13px;letter-spacing:0.000px;">4</div>
<div class="t" style="left:394.48px;top:292.86px;font-size:11px;line-height:13px;letter-spacing:0.000px;color:#800000;">4</div>
<div class="t" style="left:412.50px;top:292.86px;font-size:11px;line-height:13px;letter-spacing:-0.114px;color:#800000;">Dumitrescu Dumitru</div>
<div class="t" style="left:593.50px;top:292.86px;font-size:11px;line-height:13px;letter-spacing:0.000px;color:#800000;">B</div>
<div class="t" style="left:644.00px;top:292.86px;font-size:11px;line-height:13px;letter-spacing:-0.113px;color:#800000;">Etaj 4</div>
<div class="t" style="left:738.38px;top:292.86px;font-size:11px;line-height:13px;letter-spacing:0.000px;color:#800000;">4</div>
<svg style="left:757px;top:294px" width="9" height="8" viewBox="0 0 9 8"><path d="M0.2 3.6 L1.9 2.3 L3.4 4.2 L7.6 0.2 L8.8 1.3 L3.4 7.2 Z" fill="#800000"/></svg>
<div class="t" style="left:820.96px;top:292.86px;font-size:11px;line-height:13px;letter-spacing:0.000px;color:#800000;">3.60</div>
<div style="left:848px;top:223px;width:18px;height:373px;background:#FDFDF9;"></div>
<div style="left:850px;top:224px;width:13px;height:15px;border:1px solid #C7D5F8;border-radius:2px;background:linear-gradient(135deg,#DDE7FD,#B4C8F6);"></div>
<svg style="left:850px;top:224px" width="13" height="15"><path d="M3.0 9.0 L6.5 5.5 L10.0 9.0" fill="none" stroke="#4D6185" stroke-width="2"/></svg>
<div style="left:850px;top:241px;width:13px;height:338px;border:1px solid #BCCFF8;border-radius:2px;background:linear-gradient(90deg,#CAD9FD,#C0D2FB 60%,#B2C8F8);"></div>
<div style="left:853px;top:406px;width:7px;height:1px;background:#8EAAF0;"></div>
<div style="left:853px;top:408px;width:7px;height:1px;background:#8EAAF0;"></div>
<div style="left:853px;top:410px;width:7px;height:1px;background:#8EAAF0;"></div>
<div style="left:853px;top:412px;width:7px;height:1px;background:#8EAAF0;"></div>
<div style="left:850px;top:580px;width:13px;height:15px;border:1px solid #C7D5F8;border-radius:2px;background:linear-gradient(135deg,#DDE7FD,#B4C8F6);"></div>
<svg style="left:850px;top:580px" width="13" height="15"><path d="M3.0 5.5 L6.5 9.0 L10.0 5.5" fill="none" stroke="#4D6185" stroke-width="2"/></svg>
<div style="left:355px;top:596px;width:98px;height:23px;background:#FFFFFF;border:1px solid #7F9DB9;"></div>
<div class="t" style="left:363.25px;top:600.61px;font-size:11px;line-height:13px;letter-spacing:-0.065px;">Filtru: scari</div>
<div style="left:435px;top:599px;width:16px;height:17px;border:1px solid #B9CCF6;border-radius:2px;background:linear-gradient(135deg,#E0E9FD,#B5C8F7);"></div>
<svg style="left:435px;top:599px" width="16" height="17"><path d="M4.5 6.5 L8.0 10.0 L11.5 6.5" fill="none" stroke="#4D6185" stroke-width="2"/></svg>
<div class="t" style="left:657.50px;top:600.36px;font-size:11px;line-height:13px;letter-spacing:0.185px;font-weight:bold;">Total val. repartizata</div>
<div style="left:774px;top:597px;width:72px;height:23px;background:#FEFEF0;border:1px solid #7F9DB9;"></div>
<div class="t" style="left:818.56px;top:600.86px;font-size:11px;line-height:13px;letter-spacing:0.000px;">9.00</div>
<div style="left:349px;top:625px;width:523px;height:1px;background:#ACA899;"></div>
<div style="left:349px;top:626px;width:523px;height:1px;background:#FFFFFF;"></div>
<div class="btn" style="left:354px;top:633px;width:78px;height:21px;"></div>
<svg style="left:357px;top:634.5px" width="17" height="17" viewBox="0 0 17 17"><defs><linearGradient id="g17" x1="0" y1="0" x2="0" y2="1"><stop offset="0" stop-color="#8E8E8E"/><stop offset="0.35" stop-color="#E8E8E8"/><stop offset="0.75" stop-color="#B0B0B0"/><stop offset="1" stop-color="#404040"/></linearGradient></defs><path d="M3.5 0.5 H9.5 L12.5 3.5 V6 H3.5 Z" fill="#F0F7FF" stroke="#5A9AE8" stroke-width="0.9"/><rect x="0.6" y="5.6" width="15.8" height="8.6" rx="2.2" fill="url(#g17)" stroke="#707070" stroke-width="0.8"/><circle cx="13.3" cy="7.6" r="0.9" fill="#202020"/><rect x="3.5" y="13.2" width="10" height="3.3" fill="#FFFFFF" stroke="#5A9AE8" stroke-width="0.9"/></svg>
<div class="t" style="left:377.50px;top:636.86px;font-size:11px;line-height:13px;letter-spacing:0.261px;font-weight:bold;">Tiparire</div>
<div class="t" style="left:445.50px;top:637.86px;font-size:9.5px;line-height:11px;letter-spacing:-0.031px;font-weight:bold;color:#1E4A90;">Campul se editeaza cu &lt;dublu-click&gt; sau tasta &lt;enter&gt;</div>
<div class="btn" style="left:707px;top:633px;width:78px;height:21px;box-shadow:inset 0 2px 0 #FFF0CF, inset 0 -2px 0 #E5971F, inset 2px 0 0 #FBD88C, inset -2px 0 0 #FBD88C;"></div>
<svg style="left:727.5px;top:637px" width="17" height="15" viewBox="0 0 17 15"><path d="M0.7 4.3 L2.3 3.2 L5 7.2 L14.3 0.5 L15.4 1.8 L5 12.8 Z" fill="#2ED22E" stroke="#158A15" stroke-width="0.45" stroke-linejoin="round"/></svg>
<div class="t" style="left:746.50px;top:636.86px;font-size:11px;line-height:13px;letter-spacing:0.500px;font-weight:bold;">OK</div>
<div class="btn" style="left:789px;top:633px;width:78px;height:21px;"></div>
<svg style="left:791.5px;top:637px" width="17" height="15" viewBox="0 0 17 15"><path d="M0.7 4.3 L2.3 3.2 L5 7.2 L14.3 0.5 L15.4 1.8 L5 12.8 Z" fill="#E02020" stroke="#8A1010" stroke-width="0.45" stroke-linejoin="round"/></svg>
<div class="t" style="left:811.60px;top:636.86px;font-size:11px;line-height:13px;letter-spacing:0.005px;font-weight:bold;">Revocare</div>
<div style="left:868px;top:647px;width:2px;height:2px;background:#C8C4B4;"></div>
<div style="left:865px;top:650px;width:2px;height:2px;background:#C8C4B4;"></div>
<div style="left:868px;top:650px;width:2px;height:2px;background:#C8C4B4;"></div>
<div style="left:862px;top:653px;width:2px;height:2px;background:#C8C4B4;"></div>
<div style="left:865px;top:653px;width:2px;height:2px;background:#C8C4B4;"></div>
<div style="left:868px;top:653px;width:2px;height:2px;background:#C8C4B4;"></div>
<svg style="left:775px;top:636px" width="13" height="20" viewBox="0 0 13 20"><path d="M0.5 0.5 V16.5 L4 13 L6.5 18.5 L8.6 17.6 L6.3 12.2 H11.5 Z" fill="#fff" stroke="#000" stroke-width="1" stroke-linejoin="miter"/></svg>
<div style="left:911px;top:595px;width:2px;height:1px;background:#FFFFFF;"></div>
<div style="left:911px;top:607px;width:2px;height:7px;background:#20D080;"></div>
<div style="left:911px;top:532px;width:2px;height:6px;background:#20D080;"></div>
<svg style="left:9px;top:10px" width="15" height="13" viewBox="0 0 15 13"><path d="M0.5 2.8 L11.7 0.4 L13.8 6.6 L3.2 11.9 Z" fill="#F0A848" stroke="#B06818" stroke-width="1" stroke-linejoin="round"/><path d="M2 3.4 L10.9 1.5 L12.5 6.2 L3.8 10.4 Z" fill="#E4EEFC"/><path d="M6.4 2.5 L8.1 8.3" stroke="#9CB4D8" stroke-width="0.7"/><path d="M1.6 4.6 L2.4 6.6" stroke="#E04020" stroke-width="0.8"/></svg>
<div style="left:903px;top:662px;width:2px;height:2px;background:#C8C4B4;"></div>
<div style="left:900px;top:665px;width:2px;height:2px;background:#C8C4B4;"></div>
<div style="left:903px;top:665px;width:2px;height:2px;background:#C8C4B4;"></div>
<div style="left:897px;top:668px;width:2px;height:2px;background:#C8C4B4;"></div>
<div style="left:900px;top:668px;width:2px;height:2px;background:#C8C4B4;"></div>
<div style="left:903px;top:668px;width:2px;height:2px;background:#C8C4B4;"></div>
<div style="left:764px;top:676px;width:149px;height:1px;background:#D8DCE8;"></div></body></html>
